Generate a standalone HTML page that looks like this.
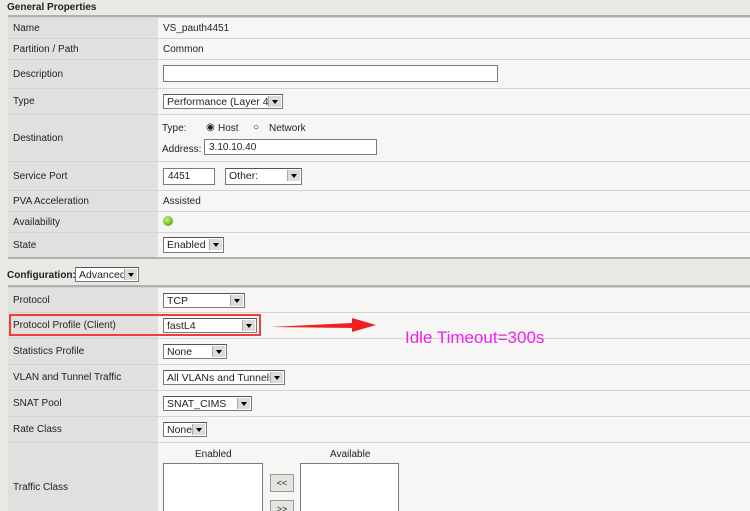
<!DOCTYPE html><html><head><style>
html,body{margin:0;width:750px;height:511px;overflow:hidden}
body{background:#e9e8e4;font-family:"Liberation Sans",Arial,sans-serif;font-size:10px;color:#222;position:relative}
.a{position:absolute}
.row{position:absolute;left:8px;right:0;border-top:1px solid #d4d4d2;}
.lab{position:absolute;left:0;top:0;bottom:0;width:149px;background:#e0e0de;border-right:1px solid #c8c8c6;padding-left:5px;display:flex;align-items:center}
.val{position:absolute;left:150px;right:0;top:0;bottom:0;background:#f6f6f4;padding-left:5px;display:flex;align-items:center}
.sel{position:absolute;height:15px;border:1px solid #7a7a7a;border-top-color:#555;background:#fff;box-sizing:border-box;font-size:10.5px;line-height:14px;padding-left:3px;white-space:nowrap;overflow:hidden}
.sel i{position:absolute;right:1px;top:1px;width:12px;height:11px;background:#dcdbd7;border-left:1px solid #aaa}
.sel i:after{content:"";position:absolute;left:3px;top:4px;border:3px solid transparent;border-top:4px solid #000;border-bottom:0}
.inp{position:absolute;height:16px;border:1px solid #7a7a7a;background:#fff;box-sizing:border-box;padding-left:4px;line-height:15px}
.hd{font-weight:bold;position:absolute;left:7px}
</style></head><body>
<div class="hd" style="top:2px">General Properties</div>
<div class="a" style="left:8px;right:0;top:15px;height:2px;background:#b0b0ae"></div>
<div class="row" style="top:17px;height:20px"><div class="lab">Name</div><div class="val">VS_pauth4451</div></div>
<div class="row" style="top:38px;height:20px"><div class="lab">Partition / Path</div><div class="val">Common</div></div>
<div class="row" style="top:59px;height:28px"><div class="lab">Description</div><div class="val"><div class="inp" style="left:5px;top:5px;width:335px;height:17px"></div></div></div>
<div class="row" style="top:88px;height:25px"><div class="lab">Type</div><div class="val"><div class="sel" style="left:5px;top:5px;width:120px">Performance (Layer 4)<i></i></div></div></div>
<div class="row" style="top:114px;height:46px"><div class="lab">Destination</div><div class="val"><div class="a" style="left:4px;top:8px">Type:</div><div class="a" style="left:48px;top:7px;font-size:10px">◉</div><div class="a" style="left:60px;top:8px">Host</div><div class="a" style="left:95px;top:7px;font-size:10px">○</div><div class="a" style="left:111px;top:8px">Network</div><div class="a" style="left:4px;top:29px">Address:</div><div class="inp" style="left:46px;top:24px;width:173px">3.10.10.40</div></div></div>
<div class="row" style="top:161px;height:28px"><div class="lab">Service Port</div><div class="val"><div class="inp" style="left:5px;top:6px;width:52px;height:17px">4451</div><div class="sel" style="left:67px;top:6px;width:77px;height:17px;line-height:15px">Other:<i></i></div></div></div>
<div class="row" style="top:190px;height:20px"><div class="lab">PVA Acceleration</div><div class="val">Assisted</div></div>
<div class="row" style="top:211px;height:20px"><div class="lab">Availability</div><div class="val"><div class="a" style="left:5px;top:4px;width:10px;height:10px;border-radius:50%;background:radial-gradient(circle at 40% 35%,#c8f08a,#6cbf1e 60%,#3e8a0a)"></div></div></div>
<div class="row" style="top:232px;height:25px"><div class="lab">State</div><div class="val"><div class="sel" style="left:5px;top:4px;width:61px;height:16px">Enabled<i></i></div></div></div>
<div class="a" style="left:8px;right:0;top:257px;height:2px;background:#b0b0ae"></div>
<div class="hd" style="top:270px">Configuration:</div>
<div class="sel" style="left:75px;top:267px;width:64px">Advanced<i></i></div>
<div class="a" style="left:8px;right:0;top:285px;height:2px;background:#b0b0ae"></div>
<div class="row" style="top:287px;height:24px"><div class="lab">Protocol</div><div class="val"><div class="sel" style="left:5px;top:5px;width:82px">TCP<i></i></div></div></div>
<div class="row" style="top:312px;height:25px"><div class="lab">Protocol Profile (Client)</div><div class="val"><div class="sel" style="left:5px;top:5px;width:94px">fastL4<i></i></div></div></div>
<div class="row" style="top:338px;height:25px"><div class="lab">Statistics Profile</div><div class="val"><div class="sel" style="left:5px;top:5px;width:64px">None<i></i></div></div></div>
<div class="row" style="top:364px;height:25px"><div class="lab">VLAN and Tunnel Traffic</div><div class="val"><div class="sel" style="left:5px;top:5px;width:122px">All VLANs and Tunnels<i></i></div></div></div>
<div class="row" style="top:390px;height:25px"><div class="lab">SNAT Pool</div><div class="val"><div class="sel" style="left:5px;top:5px;width:89px">SNAT_CIMS<i></i></div></div></div>
<div class="row" style="top:416px;height:25px"><div class="lab">Rate Class</div><div class="val"><div class="sel" style="left:5px;top:5px;width:44px">None<i></i></div></div></div>
<div class="row" style="top:442px;height:80px"><div class="lab" style="align-items:flex-start;padding-top:39px">Traffic Class</div><div class="val" style="display:block"><div class="a" style="left:37px;top:6px">Enabled</div><div class="a" style="left:172px;top:6px">Available</div>
<div class="a" style="left:5px;top:20px;width:98px;height:60px;border:1px solid #7a7a7a;background:#fff"></div>
<div class="a" style="left:142px;top:20px;width:97px;height:60px;border:1px solid #7a7a7a;background:#fff"></div>
<div class="a" style="left:112px;top:31px;width:22px;height:16px;border:1px solid #999;background:#e4e3df;font-size:9px;text-align:center;line-height:16px">&lt;&lt;</div>
<div class="a" style="left:112px;top:57px;width:22px;height:16px;border:1px solid #999;background:#e4e3df;font-size:9px;text-align:center;line-height:16px">&gt;&gt;</div></div></div>
<div class="a" style="left:9px;top:314px;width:252px;height:22px;border:2px solid #f03c3c;box-sizing:border-box"></div>
<svg class="a" style="left:270px;top:318px" width="110" height="16"><polygon points="0,9 82,5 82,0 106,7 82,14 82,10" fill="#f02020"/></svg>
<div class="a" style="left:405px;top:328px;font-size:17px;color:#f020f0;font-family:'Liberation Sans',sans-serif">Idle Timeout=300s</div>
</body></html>
